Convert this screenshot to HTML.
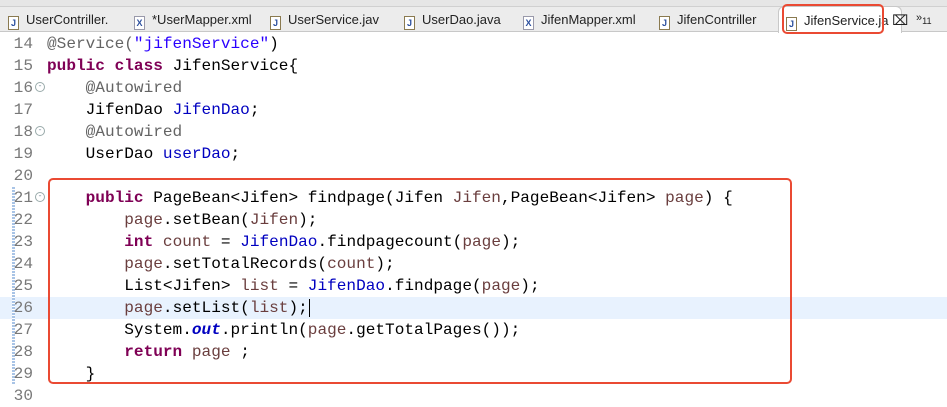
<!DOCTYPE html>
<html><head><meta charset="utf-8"><style>
body{margin:0;width:947px;height:401px;background:#fff;overflow:hidden;position:relative;font-family:"Liberation Sans",sans-serif}
.tabs{position:absolute;left:0;top:0;width:947px;height:31px;background:#ececec;border-bottom:1px solid #c8c8c8}
.tabs .top{position:absolute;left:0;top:0;width:947px;height:6px;background:#e6e6e6;border-bottom:1px solid #d0d0d0}
.tab{position:absolute;top:12px;font-size:13px;color:#222;white-space:nowrap}
.ic{display:inline-block;width:9px;height:12px;border:1px solid #8a7a50;font-size:9px;line-height:12px;text-align:center;color:#2b4f9e;font-weight:bold;vertical-align:-2px;margin-right:7px;background:#fff}
.act{position:absolute;left:778px;top:6px;width:122px;height:26px;background:#fff;border:1px solid #c8c8c8;border-bottom:none;border-radius:6px 6px 0 0}
.code{position:absolute;left:0;top:33px;font-family:"Liberation Mono",monospace;font-size:16.1px;}
.ln{height:22px;line-height:22px;white-space:pre;position:relative}
.n{display:inline-block;width:33px;text-align:right;color:#787878;margin-right:14px}
.k{color:#7f0055;font-weight:bold}.f{color:#0000c0}.s{color:#2a00ff}.a{color:#646464}.v{color:#6a3e3e}
.fold{position:absolute;left:35px;top:5px;width:8px;height:8px;border:1px solid #9aa;border-radius:50%;font-size:8px;line-height:7px;text-align:center;color:#789}
.box{position:absolute;border:2px solid #ea4a33;border-radius:5px}
</style></head><body>
<div class="tabs"><div class="top"></div>
<div class="act"></div>
<div class="tab" style="left:8px"><span class="ic">J</span>UserContriller.</div>
<div class="tab" style="left:134px"><span class="ic" style="border-color:#99a">X</span>*UserMapper.xml</div>
<div class="tab" style="left:270px"><span class="ic">J</span>UserService.jav</div>
<div class="tab" style="left:404px"><span class="ic">J</span>UserDao.java</div>
<div class="tab" style="left:523px"><span class="ic" style="border-color:#99a">X</span>JifenMapper.xml</div>
<div class="tab" style="left:659px"><span class="ic">J</span>JifenContriller</div>
<div class="tab" style="left:786px"><span class="ic">J</span>JifenService.ja <span style="font-size:14px">⌧</span></div>
<div class="tab" style="left:916px;font-size:11px">»<sub>11</sub></div>
</div>
<div class="box" style="left:782px;top:4px;width:98px;height:26px"></div>
<div style="position:absolute;left:0;top:297px;width:947px;height:22px;background:#e8f2fe"></div>
<div style="position:absolute;left:12px;top:187px;width:3px;height:198px;background:repeating-linear-gradient(#a9c4e6 0 2px,#fff 2px 3px)"></div>
<div class="code">
<div class="ln"><span class="n">14</span><span class="a">@Service(</span><span class="s">"jifenService"</span>)</div>
<div class="ln"><span class="n">15</span><span class="k">public class</span> JifenService{</div>
<div class="ln"><span class="n">16</span><span class="fold">-</span>    <span class="a">@Autowired</span></div>
<div class="ln"><span class="n">17</span>    JifenDao <span class="f">JifenDao</span>;</div>
<div class="ln"><span class="n">18</span><span class="fold">-</span>    <span class="a">@Autowired</span></div>
<div class="ln"><span class="n">19</span>    UserDao <span class="f">userDao</span>;</div>
<div class="ln"><span class="n">20</span></div>
<div class="ln"><span class="n">21</span><span class="fold">-</span>    <span class="k">public</span> PageBean&lt;Jifen&gt; findpage(Jifen <span class="v">Jifen</span>,PageBean&lt;Jifen&gt; <span class="v">page</span>) {</div>
<div class="ln"><span class="n">22</span>        <span class="v">page</span>.setBean(<span class="v">Jifen</span>);</div>
<div class="ln"><span class="n">23</span>        <span class="k">int</span> <span class="v">count</span> = <span class="f">JifenDao</span>.findpagecount(<span class="v">page</span>);</div>
<div class="ln"><span class="n">24</span>        <span class="v">page</span>.setTotalRecords(<span class="v">count</span>);</div>
<div class="ln"><span class="n">25</span>        List&lt;Jifen&gt; <span class="v">list</span> = <span class="f">JifenDao</span>.findpage(<span class="v">page</span>);</div>
<div class="ln"><span class="n">26</span>        <span class="v">page</span>.setList(<span class="v">list</span>);<span style="border-left:1.5px solid #000;margin-left:1px"></span></div>
<div class="ln"><span class="n">27</span>        System.<span class="f" style="font-weight:bold;font-style:italic">out</span>.println(<span class="v">page</span>.getTotalPages());</div>
<div class="ln"><span class="n">28</span>        <span class="k">return</span> <span class="v">page</span> ;</div>
<div class="ln"><span class="n">29</span>    }</div>
<div class="ln"><span class="n">30</span></div>
</div>
<div class="box" style="left:48px;top:178px;width:740px;height:202px"></div>
</body></html>
